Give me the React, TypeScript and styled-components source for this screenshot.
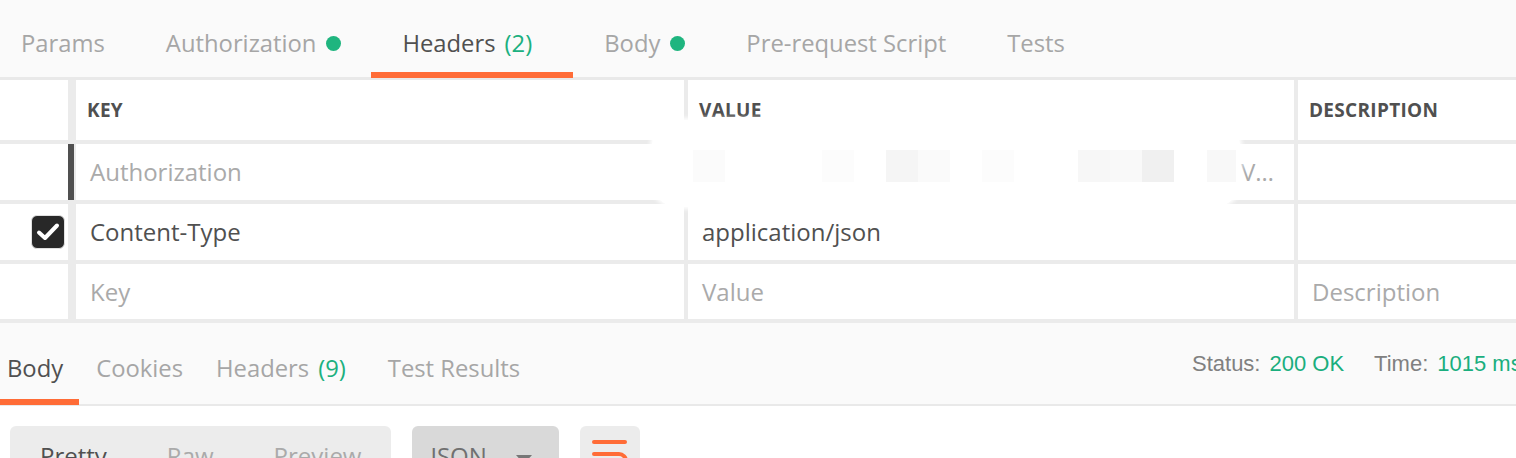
import React from "react";
import styled, { createGlobalStyle } from "styled-components";

const GlobalStyle = createGlobalStyle`
  html, body {
    margin: 0;
    padding: 0;
    background: #ffffff;
    overflow: hidden;
  }
  body {
    font-family: "Open Sans", "Liberation Sans", sans-serif;
    width: 1516px;
    height: 458px;
  }
  * { box-sizing: border-box; }
`;

const Page = styled.div`
  width: 1516px;
  height: 458px;
  overflow: hidden;
  background: #ffffff;
`;

/* ---------- Request tabs ---------- */
const TabBar = styled.div`
  display: flex;
  height: 80px;
  padding: 10px 0 0 21px;
  gap: 61px;
  background: #fafafa;
  border-bottom: 3px solid #e9e9e9;
`;

const Tab = styled.div<{ $active?: boolean; $ulLeft?: number; $ulRight?: number; $trail?: number }>`
  position: relative;
  display: flex;
  align-items: center;
  height: 100%;
  font-size: 23.8px;
  line-height: 1;
  white-space: nowrap;
  color: ${(p) => (p.$active ? "#505050" : "#a6a6a6")};
  margin-right: ${(p) => p.$trail ?? 0}px;
  &::after {
    content: "";
    display: ${(p) => (p.$active ? "block" : "none")};
    position: absolute;
    left: ${(p) => -(p.$ulLeft ?? 31)}px;
    right: ${(p) => -(p.$ulRight ?? 31)}px;
    bottom: -1px;
    height: 6px;
    background: #ff6c37;
  }
`;

const Count = styled.span`
  color: #1cb07f;
  margin-left: 9px;
`;

const Dot = styled.span`
  display: inline-block;
  width: 15px;
  height: 15px;
  border-radius: 50%;
  background: #1fb57f;
  margin-left: 10px;
`;

/* ---------- Headers table ---------- */
const TableWrap = styled.div`
  position: relative;
`;

const Table = styled.div`
  display: grid;
  grid-template-columns: 72px 608px 606px 1fr;
  grid-template-rows: 60px 56px 56px 55px;
  gap: 4px;
  padding-bottom: 4px;
  background: #ebebeb;
`;

const Cell = styled.div<{ $muted?: boolean; $end?: boolean }>`
  display: flex;
  align-items: center;
  justify-content: ${(p) => (p.$end ? "flex-end" : "flex-start")};
  padding: 0 ${(p) => (p.$end ? "20px" : "14px")} 0 14px;
  background: #ffffff;
  font-size: 24px;
  line-height: 1;
  white-space: nowrap;
  overflow: hidden;
  color: ${(p) => (p.$muted ? "#aaaaaa" : "#505050")};
`;

const HeadCell = styled.div`
  display: flex;
  align-items: center;
  padding: 0 11px;
  background: #ffffff;
  font-size: 19px;
  font-weight: 700;
  line-height: 1;
  letter-spacing: 0.3px;
  color: #505050;
`;

const CheckCell = styled.div<{ $handle?: boolean }>`
  position: relative;
  display: flex;
  align-items: center;
  justify-content: flex-end;
  padding-right: 3px;
  background: #ffffff;
  border-right: 4px solid #ebebeb;
  &::after {
    content: "";
    display: ${(p) => (p.$handle ? "block" : "none")};
    position: absolute;
    left: 68px;
    top: 0;
    bottom: 0;
    width: 6px;
    background: #505050;
  }
`;

const CheckBox = styled.span`
  display: flex;
  align-items: center;
  justify-content: center;
  width: 34px;
  height: 34px;
  border-radius: 6px;
  background: #282828;
  border: 1px solid #e0e0e0;
`;

const Redaction = styled.div`
  position: absolute;
  left: 652px;
  top: 40px;
  width: 588px;
  height: 87px;
  border-radius: 26px;
  background: #ffffff;
  box-shadow: 0 0 4px 2px #ffffff;
`;

const Pixel = styled.span<{ $w?: number }>`
  position: absolute;
  top: 30px;
  height: 32px;
  width: ${(p) => p.$w ?? 32}px;
`;

/* ---------- Response ---------- */
const ResponseBar = styled.div`
  display: flex;
  height: 83px;
  background: #fafafa;
  border-bottom: 2px solid #e9e9e9;
`;

const ResponseTabs = styled.div`
  flex: 0 0 1192px;
  display: flex;
  gap: 33px;
  padding: 10px 0 0 7px;
`;

const StatusGroup = styled.div`
  flex-shrink: 0;
  display: flex;
  align-items: center;
  font-family: "Liberation Sans", Arial, sans-serif;
  font-size: 22px;
  line-height: 1;
  white-space: nowrap;
`;

const StatusLabel = styled.span<{ $first?: boolean }>`
  color: #808080;
  margin-left: ${(p) => (p.$first ? 0 : 30)}px;
`;

const StatusValue = styled.span`
  color: #1aae7e;
  margin-left: 9px;
`;

const Toolbar = styled.div`
  display: flex;
  gap: 21px;
  padding: 20px 10px;
`;

const Segmented = styled.div`
  display: flex;
  align-items: center;
  gap: 60px;
  height: 60px;
  padding: 0 30px;
  border-radius: 6px;
  background: #ececec;
`;

const Segment = styled.span<{ $active?: boolean }>`
  font-size: 24px;
  line-height: 1;
  color: ${(p) => (p.$active ? "#505050" : "#aaaaaa")};
`;

const Dropdown = styled.div`
  display: flex;
  align-items: center;
  justify-content: space-between;
  width: 147px;
  height: 60px;
  padding: 0 27px 0 18px;
  border-radius: 6px;
  background: #d9d9d9;
  font-size: 24px;
  line-height: 1;
  color: #707070;
`;

const Caret = styled.span`
  width: 0;
  height: 0;
  margin-top: 6px;
  border-left: 8px solid transparent;
  border-right: 8px solid transparent;
  border-top: 9px solid #777777;
`;

const IconButton = styled.div`
  width: 60px;
  height: 60px;
  padding: 12px 0 0 12px;
  border-radius: 6px;
  background: #ececec;
`;

const pixels: { x: number; c: string; w?: number }[] = [
  { x: 41, c: "#fbfbfb" },
  { x: 170, c: "#fcfcfc" },
  { x: 234, c: "#f5f5f5" },
  { x: 266, c: "#fafafa" },
  { x: 330, c: "#fcfcfc" },
  { x: 426, c: "#f7f7f7" },
  { x: 458, c: "#f9f9f9" },
  { x: 490, c: "#f0f0f0" },
  { x: 555, c: "#f8f8f8", w: 29 },
];

export default function App() {
  return (
    <Page>
      <GlobalStyle />
      <TabBar>
        <Tab>Params</Tab>
        <Tab>
          Authorization
          <Dot />
        </Tab>
        <Tab $active $ulLeft={31} $ulRight={41} $trail={11}>
          Headers<Count>(2)</Count>
        </Tab>
        <Tab>
          Body
          <Dot />
        </Tab>
        <Tab>Pre-request Script</Tab>
        <Tab>Tests</Tab>
      </TabBar>

      <TableWrap>
        <Table>
          <CheckCell />
          <HeadCell>KEY</HeadCell>
          <HeadCell>VALUE</HeadCell>
          <HeadCell>DESCRIPTION</HeadCell>

          <CheckCell $handle />
          <Cell $muted>Authorization</Cell>
          <Cell $muted $end>V…</Cell>
          <Cell />

          <CheckCell>
            <CheckBox>
              <svg width="24" height="20" viewBox="0 0 24 20" fill="none">
                <path d="M3 10.5 L9 16 L21 3.5" stroke="#ffffff" strokeWidth="4" strokeLinecap="round" strokeLinejoin="round" />
              </svg>
            </CheckBox>
          </CheckCell>
          <Cell>Content-Type</Cell>
          <Cell>application/json</Cell>
          <Cell />

          <CheckCell />
          <Cell $muted>Key</Cell>
          <Cell $muted>Value</Cell>
          <Cell $muted>Description</Cell>
        </Table>
        <Redaction>
          {pixels.map((p) => (
            <Pixel key={p.x} $w={p.w} style={{ left: p.x, background: p.c }} />
          ))}
        </Redaction>
      </TableWrap>

      <ResponseBar>
        <ResponseTabs>
          <Tab $active $ulLeft={7} $ulRight={16}>Body</Tab>
          <Tab>Cookies</Tab>
          <Tab $trail={9}>
            Headers<Count>(9)</Count>
          </Tab>
          <Tab>Test Results</Tab>
        </ResponseTabs>
        <StatusGroup>
          <StatusLabel $first>Status:</StatusLabel>
          <StatusValue>200 OK</StatusValue>
          <StatusLabel>Time:</StatusLabel>
          <StatusValue>1015 ms</StatusValue>
        </StatusGroup>
      </ResponseBar>

      <Toolbar>
        <Segmented>
          <Segment $active>Pretty</Segment>
          <Segment>Raw</Segment>
          <Segment>Preview</Segment>
        </Segmented>
        <Dropdown>
          JSON
          <Caret />
        </Dropdown>
        <IconButton>
          <svg width="36" height="36" viewBox="0 0 36 36" fill="none">
            <path d="M2 4 H33" stroke="#ff6c37" strokeWidth="4" strokeLinecap="round" />
            <path d="M2 16 H27 A7 7 0 0 1 27 30 H20" stroke="#ff6c37" strokeWidth="4" strokeLinecap="round" />
            <path d="M2 28 H12" stroke="#ff6c37" strokeWidth="4" strokeLinecap="round" />
          </svg>
        </IconButton>
      </Toolbar>
    </Page>
  );
}
